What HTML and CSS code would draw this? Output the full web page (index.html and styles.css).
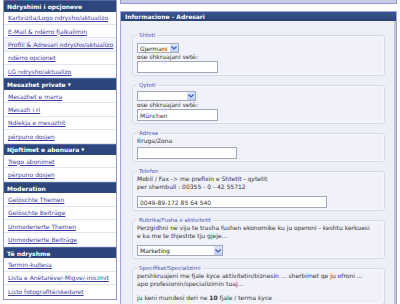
FILE: index.html
```html
<!DOCTYPE html>
<html lang="sq">
<head>
    <meta charset="UTF-8">
    <title>Informacione - Adresari</title>
    <link rel="stylesheet" href="styles.css">
</head>
<body>
<div class="page">

    <!-- Menuja anësore -->
    <div class="sidebar">
        <div class="side-head">Ndryshimi i opcjoneve</div>
        <div class="side-row"><a href="#">Kartvizita/Logo ndrysho/aktualizo</a></div>
        <div class="side-row"><a href="#">E-Mail &amp; ndërro fjalkalimin</a></div>
        <div class="side-row current"><a href="#">Profili &amp; Adresari ndrysho/aktualizo</a></div>
        <div class="side-row"><a href="#">ndërro opcionet</a></div>
        <div class="side-row"><a href="#">LG ndrysho/aktualizo</a></div>

        <div class="side-head">Mesazhet private <span class="caret">&#9660;</span></div>
        <div class="side-row"><a href="#">Mesazhet e marra</a></div>
        <div class="side-row"><a href="#">Mesazh i ri</a></div>
        <div class="side-row"><a href="#">Ndiekja e mesazhit</a></div>
        <div class="side-row"><a href="#">përpuno dosjen</a></div>

        <div class="side-head">Njoftimet e abonuara <span class="caret">&#9660;</span></div>
        <div class="side-row"><a href="#">Trego abonimet</a></div>
        <div class="side-row"><a href="#">përpuno dosjen</a></div>

        <div class="side-head">Moderation</div>
        <div class="side-row"><a href="#">Gelöschte Themen</a></div>
        <div class="side-row"><a href="#">Gelöschte Beiträge</a></div>
        <div class="side-row"><a href="#">Unmoderierte Themen</a></div>
        <div class="side-row"><a href="#">Unmoderierte Beiträge</a></div>

        <div class="side-head">Të ndryshme</div>
        <div class="side-row"><a href="#">Termin-kujtesa</a></div>
        <div class="side-row"><a href="#">Lista e Anëtarëve/-Migve/-inicimit</a></div>
        <div class="side-row"><a href="#">Listo fotografitë/skedaret</a></div>
    </div>

    <!-- Pjesa kryesore -->
    <div class="main">
        <div class="top-strip"></div>

        <div class="panel">
            <div class="panel-head">Informacione - Adresari</div>
            <div class="panel-body">

                <fieldset class="fs-shteti">
                    <legend>Shteti</legend>
                    <div class="select sel-country">
                        <span class="sel-text">Gjermani</span>
                        <span class="sel-btn"><svg width="6" height="4" viewBox="0 0 6 4"><path d="M0.5 0.5 L3 3 L5.5 0.5" fill="none" stroke="#3b5bb5" stroke-width="1.2"/></svg></span>
                    </div>
                    <div class="label">ose shkruajani vetë:</div>
                    <input class="field w-short" type="text" value="">
                </fieldset>

                <fieldset class="fs-qyteti">
                    <legend>Qyteti</legend>
                    <div class="select sel-city">
                        <span class="sel-text"></span>
                        <span class="sel-btn"><svg width="6" height="4" viewBox="0 0 6 4"><path d="M0.5 0.5 L3 3 L5.5 0.5" fill="none" stroke="#3b5bb5" stroke-width="1.2"/></svg></span>
                    </div>
                    <div class="label">ose shkruajani vetë:</div>
                    <input class="field w-short" type="text" value="München">
                </fieldset>

                <fieldset class="fs-adresa">
                    <legend>Adresa</legend>
                    <div class="label">Rruga/Zona</div>
                    <input class="field w-mid" type="text" value="">
                </fieldset>

                <fieldset class="fs-telefon">
                    <legend>Telefon</legend>
                    <div class="label">Mobil / Fax -&gt; me prefixin e Shtetit - qytetit<br>per shembull : 00355 - 0 - 42 55712</div>
                    <input class="field w-long" type="text" value="0049-89-172 85 64 540">
                </fieldset>

                <fieldset class="fs-rubrika">
                    <legend>Rubrika/Fusha e aktivitetit</legend>
                    <div class="label">Perzgidhni ne vija te trasha fushen ekonomike ku ju operoni - keshtu kerkuesi<br>e ka me te thjeshte tju gjeje...</div>
                    <div class="select sel-branch">
                        <span class="sel-text">Marketing</span>
                        <span class="sel-btn"><svg width="6" height="4" viewBox="0 0 6 4"><path d="M0.5 0.5 L3 3 L5.5 0.5" fill="none" stroke="#3b5bb5" stroke-width="1.2"/></svg></span>
                    </div>
                </fieldset>

                <fieldset class="fs-spec">
                    <legend>Specifikat/Specializimi</legend>
                    <div class="label">pershkruajeni me fjale kyce aktivitetin/biznesin ... sherbimet qe ju ofroni ...<br>apo profesionin/specializimin tuaj...</div>
                    <div class="label note">ju keni mundesi deri ne <b>10</b> fjale / terma kyce</div>
                </fieldset>

            </div>
        </div>
    </div>

</div>
</body>
</html>
```

FILE: styles.css
```css
body {
    margin: 0;
    background-color: #fff;
    font-family: "DejaVu Sans", Verdana, sans-serif;
    font-size: 6px;
    color: #333;
}
.page {
    display: flex;
    align-items: flex-start;
    gap: 3px;
    padding-left: 3px;
}

/* Menuja anësore */
.sidebar {
    width: 114px;
    box-sizing: border-box;
    border: 1px solid #8f97c8;
    border-top-width: 0;
    background-color: #fff;
}
.side-head {
    height: 11.5px;
    box-sizing: border-box;
    padding-left: 3px;
    display: flex;
    align-items: center;
    background-color: #2d477c;
    border-top: 1px solid #4f67a0;
    color: #fff;
    font-weight: bold;
}
.side-head .caret {
    font-size: 4px;
    margin-left: 2px;
}
.side-row {
    height: 13.4px;
    box-sizing: border-box;
    padding-left: 4px;
    display: flex;
    align-items: center;
    border-bottom: 1px solid #e3e5ee;
}
.side-row:last-child {
    border-bottom: none;
}
.side-row.current {
    background-color: #f3f4fb;
}
.side-row a {
    color: #3b3ba0;
    text-decoration: underline;
    white-space: nowrap;
}

/* Pjesa kryesore */
.main {
    width: 277px;
}
.top-strip {
    height: 3px;
    background-color: #c9cce9;
    border: 1px solid #9298cb;
    border-top: none;
    margin-bottom: 7px;
}
.panel {
    border: 1px solid #a2a6da;
}
.panel-head {
    height: 9px;
    padding-left: 4px;
    display: flex;
    align-items: center;
    background: linear-gradient(#3a5590, #2a4277);
    color: #fff;
    font-weight: bold;
}
.panel-body {
    background-color: #eceef8;
    border-right: 2px solid #c3c4cc;
    padding: 11px 9px 4px 11px;
}

fieldset {
    margin: 0 0 6px 0;
    padding: 0 4px 2px 4px;
    border: 1px solid #d4d7e4;
    border-radius: 3px;
    box-shadow: inset 0 0 0 1px #f7f8fc;
    background-color: #f0f1f9;
}
legend {
    padding: 0 2px;
    color: #4655b0;
    font-size: 5.5px;
    line-height: 7px;
}
.label {
    line-height: 8px;
    color: #333;
}
.note {
    margin-top: 6px;
}
.field {
    display: block;
    box-sizing: border-box;
    height: 12px;
    margin: 0;
    padding: 0 2px;
    border: 1px solid #a3a9bd;
    background-color: #fff;
    font-family: "DejaVu Sans", Verdana, sans-serif;
    font-size: 6px;
    color: #333;
}
.w-short { width: 81px; }
.w-mid { width: 100px; }
.w-long { width: 190px; }

.fs-adresa .field { margin-top: 2px; }
.fs-telefon .field { margin-top: 5px; }

/* Lista e zgjedhjes */
.select {
    display: flex;
    align-items: stretch;
    box-sizing: border-box;
    height: 10px;
    border: 1px solid #a3a9bd;
    background-color: #fff;
}
.sel-text {
    flex: 1;
    padding-left: 2px;
    display: flex;
    align-items: center;
    color: #222;
}
.sel-btn {
    width: 8px;
    display: flex;
    align-items: center;
    justify-content: center;
    background: linear-gradient(#dce6fb, #bfcff3);
    border-left: 1px solid #fff;
}
.sel-country { width: 42px; margin-top: 4px; }
.sel-city { width: 59px; margin-top: 2px; }
.sel-branch { width: 86px; height: 11px; margin-top: 5px; }
```
